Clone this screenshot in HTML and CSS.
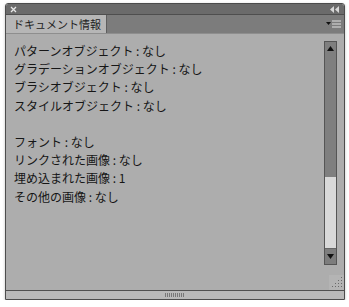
FILE: index.html
```html
<!DOCTYPE html>
<html lang="ja">
<head>
    <meta charset="UTF-8">
    <title>ドキュメント情報</title>
    <link rel="stylesheet" href="styles.css">
</head>
<body>
    <div class="panel">
        <div class="title-bar">
            <svg class="close-icon" width="7" height="7" viewBox="0 0 7 7">
                <path d="M1 1 L6 6 M6 1 L1 6" stroke="#e8e8e8" stroke-width="1.3"/>
            </svg>
            <svg class="collapse-icon" width="9" height="7" viewBox="0 0 9 7">
                <path d="M4 0 L0 3.5 L4 7 Z M9 0 L5 3.5 L9 7 Z" fill="#d8d8d8"/>
            </svg>
        </div>
        <div class="tab-bar">
            <div class="tab">ドキュメント情報</div>
            <svg class="menu-icon" width="15" height="9" viewBox="0 0 15 9">
                <path d="M0 2 L5 2 L2.5 5 Z" fill="#111"/>
                <path d="M6 1 H15 M6 4 H15 M6 7 H15" stroke="#e0e0e0" stroke-width="1.2"/>
            </svg>
        </div>
        <div class="content">
            <div class="info-list">
                <div class="info-row">パターンオブジェクト : なし</div>
                <div class="info-row">グラデーションオブジェクト : なし</div>
                <div class="info-row">ブラシオブジェクト : なし</div>
                <div class="info-row">スタイルオブジェクト : なし</div>
                <div class="info-row blank"></div>
                <div class="info-row">フォント : なし</div>
                <div class="info-row">リンクされた画像 : なし</div>
                <div class="info-row">埋め込まれた画像 : 1</div>
                <div class="info-row">その他の画像 : なし</div>
            </div>
            <div class="scrollbar">
                <div class="thumb">
                    <svg class="arrow" width="7" height="5" viewBox="0 0 7 5"><path d="M0 5 L3.5 0 L7 5 Z" fill="#111"/></svg>
                </div>
                <div class="track"></div>
                <div class="down-btn">
                    <svg class="arrow" width="7" height="5" viewBox="0 0 7 5"><path d="M0 0 L7 0 L3.5 5 Z" fill="#111"/></svg>
                </div>
            </div>
            <svg class="resize-grip" width="15" height="15" viewBox="0 0 15 15">
                <g fill="#6a6a6a">
                    <rect x="12" y="2" width="1" height="1"/>
                    <rect x="9" y="5" width="1" height="1"/><rect x="12" y="5" width="1" height="1"/>
                    <rect x="6" y="8" width="1" height="1"/><rect x="9" y="8" width="1" height="1"/><rect x="12" y="8" width="1" height="1"/>
                    <rect x="3" y="11" width="1" height="1"/><rect x="6" y="11" width="1" height="1"/><rect x="9" y="11" width="1" height="1"/><rect x="12" y="11" width="1" height="1"/>
                </g>
            </svg>
        </div>
        <div class="footer">
            <div class="grip-lines"></div>
        </div>
    </div>
</body>
</html>
```

FILE: styles.css
```css
* {
    margin: 0;
    padding: 0;
    box-sizing: border-box;
}

body {
    background: #ffffff;
    padding: 3px 4px 0 5px;
    font-family: "Noto Sans CJK JP", "Noto Sans", sans-serif;
}

.panel {
    width: 340px;
    height: 297px;
    border: 1px solid #4c4c4c;
    border-radius: 3px 3px 0 0;
    display: flex;
    flex-direction: column;
    box-shadow: 0 1px 3px rgba(0, 0, 0, 0.25);
    overflow: hidden;
}

.title-bar {
    height: 11px;
    background: #6b6b6b;
    border-bottom: 1px solid #4e4e4e;
    display: flex;
    align-items: center;
    justify-content: space-between;
    padding: 0 5px 0 4px;
}

.tab-bar {
    height: 19px;
    background: #7c7c7c;
    border-bottom: 1px solid #8e8e8e;
    display: flex;
    align-items: stretch;
    justify-content: space-between;
    padding-right: 3px;
}

.tab {
    width: 101px;
    background: #b6b6b6;
    border-right: 1px solid #5e5e5e;
    font-size: 11px;
    line-height: 18px;
    color: #222;
    padding-left: 7px;
    white-space: nowrap;
}

.menu-icon {
    align-self: center;
}

.content {
    flex: 1;
    background: #adadad;
    border-bottom: 1px solid #505050;
    display: flex;
    justify-content: space-between;
    position: relative;
}

.info-list {
    padding: 8px 0 0 8px;
    font-size: 12px;
    line-height: 18.2px;
    color: #161616;
}

.info-row {
    height: 18.2px;
    white-space: nowrap;
}

.scrollbar {
    width: 13px;
    height: 224px;
    margin: 7px 7px 0 0;
    border: 1px solid #555;
    display: flex;
    flex-direction: column;
}

.thumb {
    height: 135px;
    background: #7f7f7f;
    display: flex;
    justify-content: center;
    padding-top: 4px;
}

.track {
    flex: 1;
    background: #d9d9d9;
}

.down-btn {
    height: 16px;
    background: #7d7d7d;
    border-top: 1px solid #666;
    display: flex;
    justify-content: center;
    align-items: center;
}

.resize-grip {
    position: absolute;
    right: 0;
    bottom: 0;
    background: #b4b4b4;
}

.footer {
    height: 8px;
    background: #b9b9b9;
    display: flex;
    justify-content: center;
    align-items: center;
}

.grip-lines {
    width: 20px;
    height: 4px;
    background: repeating-linear-gradient(90deg, #777 0 1px, transparent 1px 2px);
}
```
